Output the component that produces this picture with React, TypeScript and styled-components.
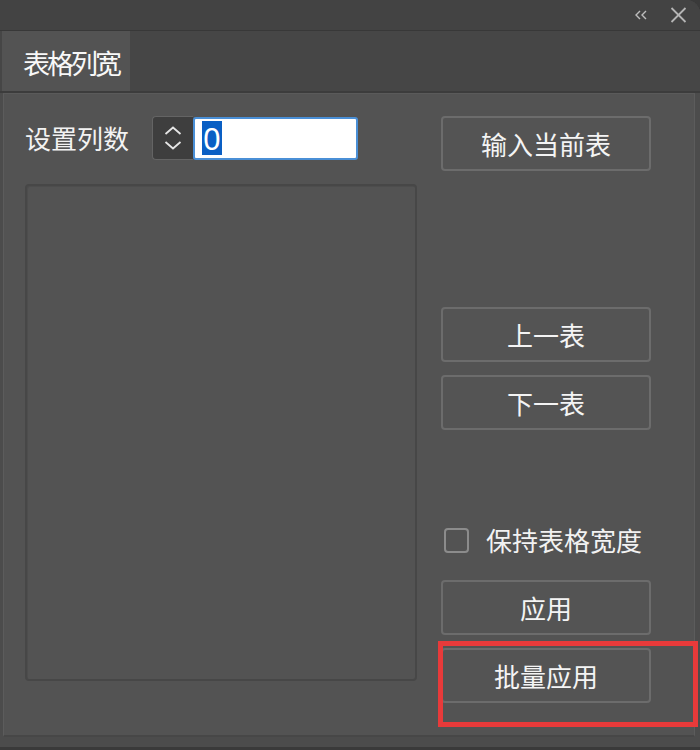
import React from "react";
import styled, { createGlobalStyle } from "styled-components";

const Global = createGlobalStyle`
  html, body { margin: 0; padding: 0; background: #3a3a3a; }
  body { font-family: "Noto Sans CJK SC", "Noto Sans", sans-serif; }
  * { box-sizing: border-box; }
`;

const Window = styled.div`
  position: relative;
  width: 700px;
  height: 750px;
  background: #4c4c4c;
  border-top-right-radius: 14px;
  overflow: hidden;
  display: flex;
  flex-direction: column;
  border-bottom: 3px solid #3a3a3a;
`;

const TitleBar = styled.div`
  flex-shrink: 0;
  height: 31px;
  background: #434343;
  border-bottom: 1px solid #383838;
  display: flex;
  align-items: center;
  justify-content: flex-end;
  gap: 20px;
  padding-right: 13px;
`;

const IconButton = styled.span`
  display: flex;
  align-items: center;
  justify-content: center;
  color: #bdbdbd;
`;

const TabStrip = styled.div`
  flex-shrink: 0;
  height: 62px;
  background: #464646;
  display: flex;
  align-items: stretch;
  padding-left: 2px;
  border-bottom: 2px solid #3c3c3c;
`;

const Tab = styled.div`
  width: 128px;
  background: #535353;
  color: #f8f8f8;
  font-size: 27px;
  letter-spacing: -3px;
  display: flex;
  align-items: center;
  padding-left: 21px;
  padding-top: 2px;
`;

const Panel = styled.div`
  flex: 1;
  min-height: 0;
  margin: 0 5px 10px 3px;
  background: #535353;
  border: 1px solid #5c5c5c;
  border-top-color: #5a5a5a;
  border-bottom: 2px solid #474747;
  display: flex;
  gap: 24px;
  padding: 22px 0 0 21px;
`;

const LeftCol = styled.div`
  width: 392px;
  display: flex;
  flex-direction: column;
  gap: 24px;
  padding-bottom: 54px;
`;

const CountRow = styled.div`
  display: flex;
  align-items: center;
  height: 44px;
  flex-shrink: 0;
`;

const Label = styled.span`
  color: #f2f2f2;
  font-size: 26px;
  margin-right: 23px;
  line-height: 1;
`;

const Spinner = styled.div`
  width: 41px;
  height: 44px;
  background: #3e3e3e;
  border: 1px solid #646464;
  border-right: none;
  border-radius: 4px 0 0 4px;
  display: flex;
  flex-direction: column;
  align-items: center;
  justify-content: center;
  gap: 6px;
`;

const NumberInput = styled.div`
  width: 165px;
  height: 43px;
  background: #ffffff;
  border: 2px solid #4a8fd6;
  border-radius: 3px;
  display: flex;
  align-items: center;
  padding-left: 7px;
`;

const Selected = styled.span`
  background: #0a5fc4;
  color: #ffffff;
  font-family: "Noto Sans", "DejaVu Sans", sans-serif;
  font-size: 31px;
  line-height: 34px;
  padding: 0 1px;
`;

const ListBox = styled.div`
  flex: 1;
  border: 2px solid #474747;
  border-radius: 4px;
  background: #535353;
  box-shadow: inset 1px 1px 0 #4d4d4d;
`;

const RightCol = styled.div`
  width: 210px;
  display: flex;
  flex-direction: column;
`;

const Button = styled.button<{ $top?: number }>`
  flex-shrink: 0;
  height: 55px;
  width: 210px;
  margin-top: ${(p) => p.$top ?? 0}px;
  background: #545454;
  border: 2px solid #6c6c6c;
  border-radius: 4px;
  color: #f4f4f4;
  font-family: "Noto Sans CJK SC", sans-serif;
  font-size: 26px;
  line-height: 1;
  padding: 0;
  display: flex;
  align-items: center;
  justify-content: center;
`;

const CheckRow = styled.label`
  display: flex;
  align-items: center;
  margin-top: 95px;
  height: 30px;
  padding-left: 3px;
  gap: 17px;
`;

const CheckBox = styled.span`
  width: 25px;
  height: 25px;
  border: 2px solid #8c8c8c;
  border-radius: 4px;
`;

const CheckLabel = styled.span`
  color: #f2f2f2;
  font-size: 26px;
  line-height: 1;
`;

const Highlight = styled.div`
  position: absolute;
  left: 438px;
  top: 641px;
  width: 260px;
  height: 86px;
  border: 5px solid #e83a3a;
  pointer-events: none;
`;

export default function App() {
  return (
    <>
      <Global />
      <Window>
        <TitleBar>
          <IconButton>
            <svg width="16" height="10" viewBox="0 0 16 10" fill="none" stroke="#bdbdbd" strokeWidth="1.4">
              <path d="M6 1 L2 5 L6 9" />
              <path d="M12 1 L8 5 L12 9" />
            </svg>
          </IconButton>
          <IconButton>
            <svg width="17" height="16" viewBox="0 0 17 16" fill="none" stroke="#b5b5b5" strokeWidth="1.8">
              <path d="M1.5 1 L15.5 15" />
              <path d="M15.5 1 L1.5 15" />
            </svg>
          </IconButton>
        </TitleBar>
        <TabStrip>
          <Tab>表格列宽</Tab>
        </TabStrip>
        <Panel>
          <LeftCol>
            <CountRow>
              <Label>设置列数</Label>
              <Spinner>
                <svg width="18" height="9" viewBox="0 0 18 9" fill="none" stroke="#e6e6e6" strokeWidth="1.8">
                  <path d="M1.5 8 L9 1.5 L16.5 8" />
                </svg>
                <svg width="18" height="9" viewBox="0 0 18 9" fill="none" stroke="#e6e6e6" strokeWidth="1.8">
                  <path d="M1.5 1 L9 7.5 L16.5 1" />
                </svg>
              </Spinner>
              <NumberInput>
                <Selected>0</Selected>
              </NumberInput>
            </CountRow>
            <ListBox />
          </LeftCol>
          <RightCol>
            <Button $top={0}>输入当前表</Button>
            <Button $top={136}>上一表</Button>
            <Button $top={13}>下一表</Button>
            <CheckRow>
              <CheckBox />
              <CheckLabel>保持表格宽度</CheckLabel>
            </CheckRow>
            <Button $top={25}>应用</Button>
            <Button $top={13}>批量应用</Button>
          </RightCol>
        </Panel>
        <Highlight />
      </Window>
    </>
  );
}
